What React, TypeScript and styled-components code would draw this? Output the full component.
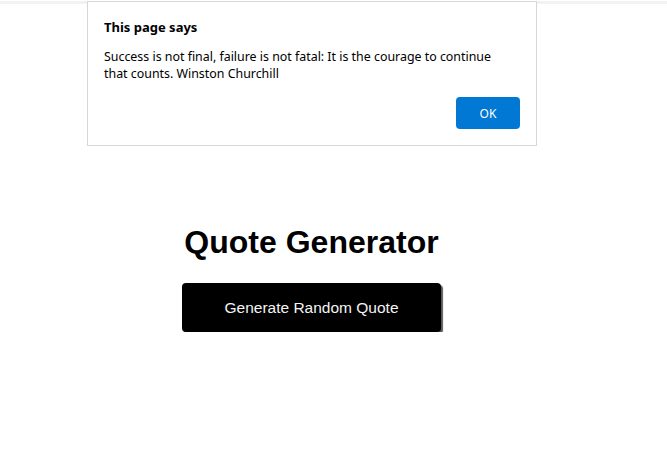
import React from 'react';
import styled, { createGlobalStyle } from 'styled-components';

const GlobalStyle = createGlobalStyle`
  html, body {
    margin: 0;
    padding: 0;
    background: #ffffff;
  }
  body {
    font-family: "Liberation Sans", Arial, sans-serif;
  }
`;

const TopStrip = styled.div`
  position: absolute;
  top: 1px;
  left: 0;
  right: 0;
  height: 3px;
  background: #f2f2f2;
`;

const Main = styled.main`
  width: 623px;
  padding-top: 203px;
  text-align: center;
`;

const Title = styled.h1`
  font-size: 32px;
  font-weight: bold;
  margin: 21px 0 22px;
  color: #000;
`;

const GenerateButton = styled.button`
  font-family: "Liberation Sans", Arial, sans-serif;
  font-size: 15.5px;
  line-height: 19px;
  width: 259px;
  padding: 15px 0;
  color: #f4f4f4;
  background: #000000;
  border: none;
  border-radius: 4px;
  box-shadow: 2px 2px 1px #5a5a5a;
  cursor: pointer;
`;

const Dialog = styled.div`
  position: absolute;
  top: 1px;
  left: 87px;
  width: 448px;
  height: 143px;
  background: #ffffff;
  border: 1px solid #d6d6d6;
  font-family: "Noto Sans", "Open Sans", sans-serif;
  color: #000;
`;

const DialogBody = styled.div`
  padding: 16px 16px 0 16px;
`;

const DialogTitle = styled.div`
  font-size: 13px;
  font-weight: bold;
  line-height: 18px;
`;

const DialogMessage = styled.div`
  max-width: 395px;
  margin-top: 12px;
  font-size: 12.4px;
  line-height: 17px;
`;

const DialogFooter = styled.div`
  display: flex;
  justify-content: flex-end;
  padding: 15px 16px 0 0;
`;

const OkButton = styled.button`
  width: 64px;
  height: 32px;
  border: none;
  border-radius: 4px;
  background: #0078d4;
  color: #ffffff;
  font-family: "Noto Sans", "Open Sans", sans-serif;
  font-size: 12px;
`;

const App: React.FC = () => {
  return (
    <>
      <GlobalStyle />
      <TopStrip />
      <Main>
        <Title>Quote Generator</Title>
        <GenerateButton>Generate Random Quote</GenerateButton>
      </Main>
      <Dialog>
        <DialogBody>
          <DialogTitle>This page says</DialogTitle>
          <DialogMessage>
            Success is not final, failure is not fatal: It is the courage to continue that counts. Winston Churchill
          </DialogMessage>
        </DialogBody>
        <DialogFooter>
          <OkButton>OK</OkButton>
        </DialogFooter>
      </Dialog>
    </>
  );
};

export default App;
